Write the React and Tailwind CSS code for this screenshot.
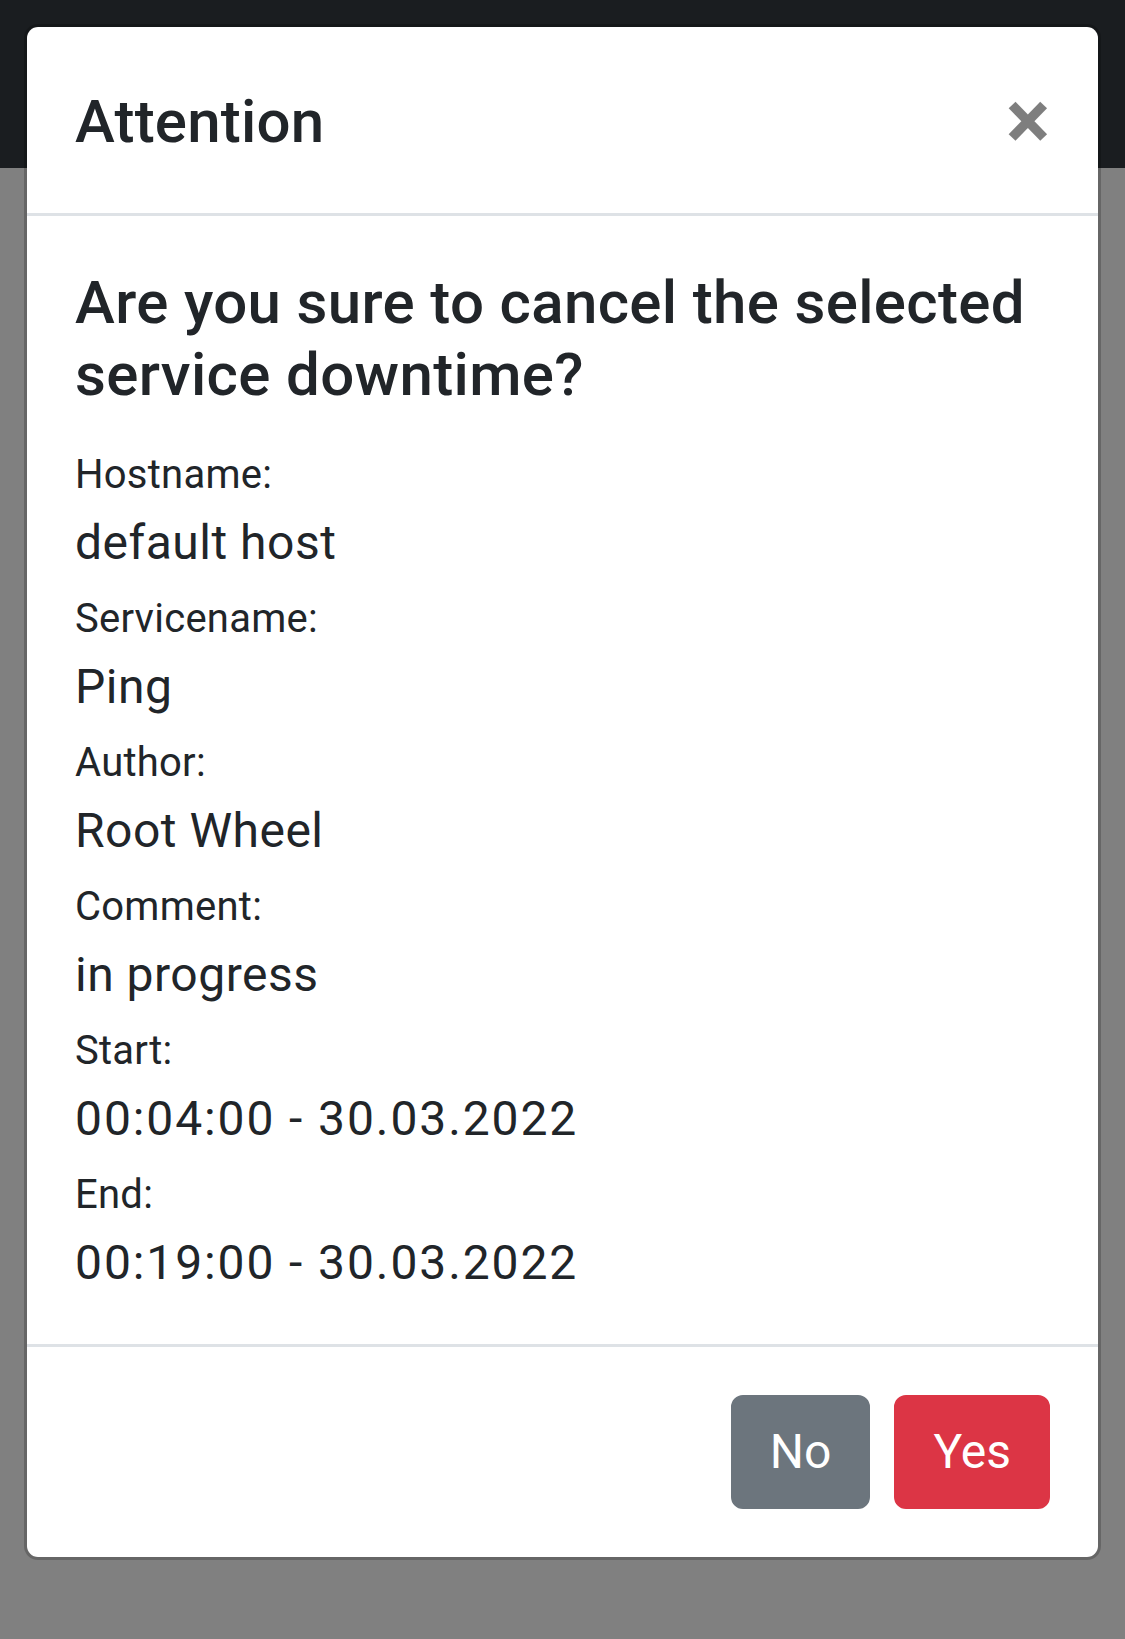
const details = [
  { label: 'Hostname:', value: 'default host' },
  { label: 'Servicename:', value: 'Ping' },
  { label: 'Author:', value: 'Root Wheel' },
  { label: 'Comment:', value: 'in progress' },
  { label: 'Start:', value: '00:04:00 - 30.03.2022', date: true },
  { label: 'End:', value: '00:19:00 - 30.03.2022', date: true },
]

export default function App() {
  return (
    <div
      className="relative flex min-h-[1639px] w-full flex-col bg-[#808080]"
      style={{ fontFamily: 'Roboto, "Liberation Sans", sans-serif' }}
    >
      <div className="h-[168px] bg-[#1a1d20]" />

      {/* modal over the dimmed page */}
      <div className="absolute left-[24px] right-[24px] top-[24px] rounded-[14px] border-[3px] border-black/20 bg-white bg-clip-padding text-[#212529]">
        <div className="flex items-start justify-between border-b-[3px] border-[#dee2e6] px-[48px] pb-[46px] pt-[50px]">
          <h5 className="text-[60px] font-medium leading-[90px] tracking-[0.2px]">Attention</h5>
          <button className="-mb-[46px] -mr-[48px] -mt-[50px] ml-auto px-[48px] pb-[46px] pt-[52px] text-[83px] font-bold leading-none text-black opacity-50">
            ×
          </button>
        </div>

        <div className="px-[48px] pb-[45px] pt-[51px]">
          <h5 className="mb-[32px] text-[60px] font-medium leading-[72px] tracking-[0.35px]">
            Are you sure to cancel the selected service downtime?
          </h5>
          {details.map((d, i) => (
            <div key={d.label} className={i < details.length - 1 ? 'mb-[8px]' : ''}>
              <div className="text-[40px] leading-[64px] tracking-[0.25px]">{d.label}</div>
              <div
                className={
                  d.date
                    ? 'text-[48px] leading-[72px] tracking-[1.9px]'
                    : 'text-[48px] leading-[72px] tracking-[0.5px]'
                }
              >
                {d.value}
              </div>
            </div>
          ))}
        </div>

        <div className="flex items-center justify-end gap-[24px] border-t-[3px] border-[#dee2e6] p-[48px]">
          <button className="rounded-[12px] border-[3px] border-[#6c757d] bg-[#6c757d] px-[36px] py-[18px] text-[48px] leading-[72px] text-white">
            No
          </button>
          <button className="rounded-[12px] border-[3px] border-[#dc3545] bg-[#dc3545] px-[36px] py-[18px] text-[48px] leading-[72px] text-white">
            Yes
          </button>
        </div>
      </div>
    </div>
  )
}
